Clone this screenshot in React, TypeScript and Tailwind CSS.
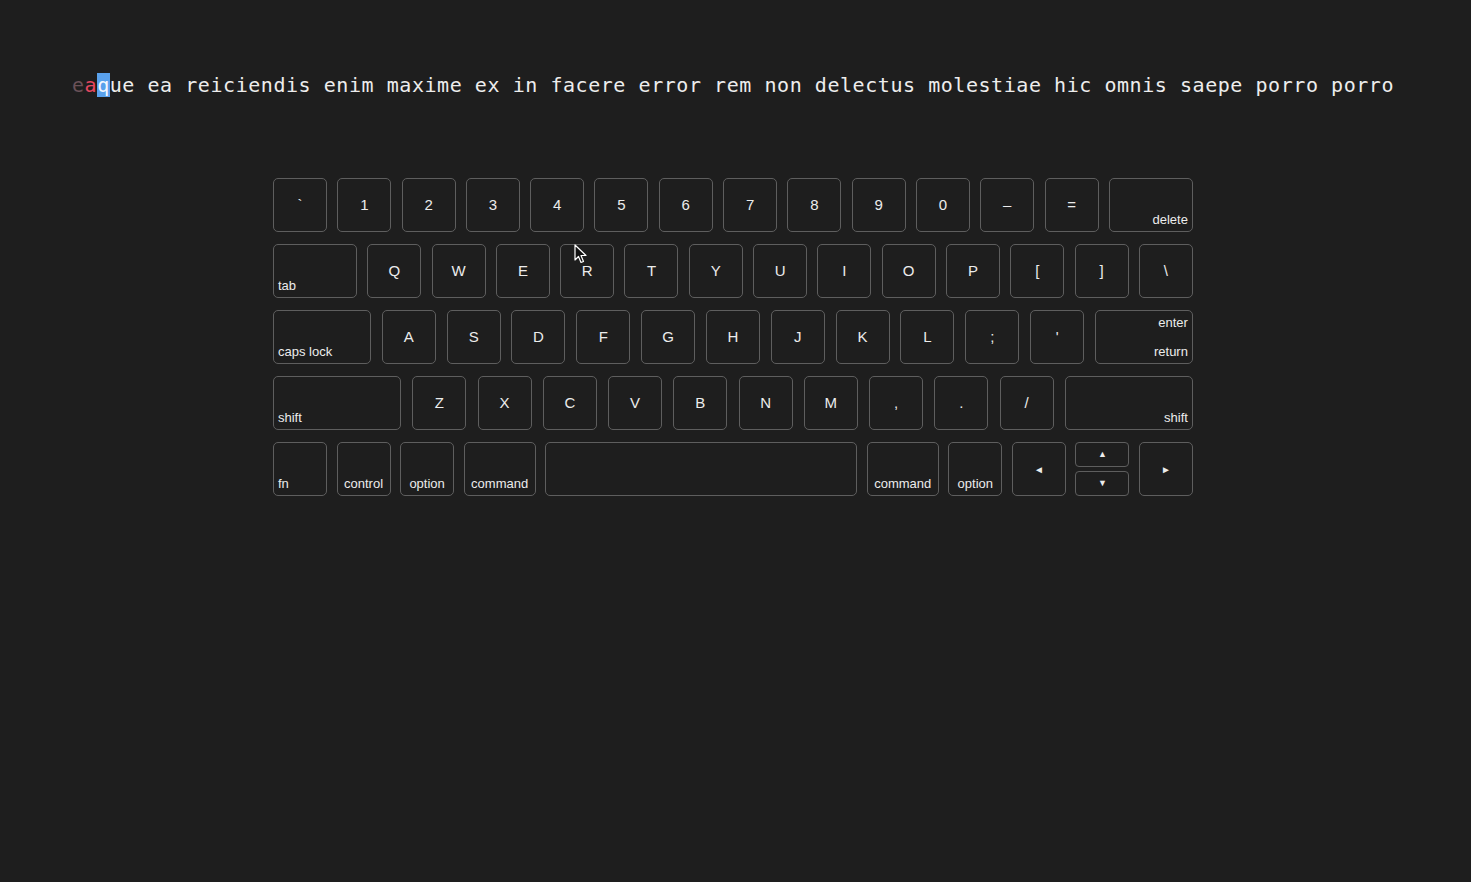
import React from 'react';

type KeyDef = {
  label: string;
  w: number;
  kind?: 'char' | 'left' | 'bottom' | 'right' | 'enter' | 'arrow' | 'updown' | 'blank';
};

const rows: KeyDef[][] = [
  [
    ...['`', '1', '2', '3', '4', '5', '6', '7', '8', '9', '0', '–', '='].map((c) => ({ label: c, w: 54 })),
    { label: 'delete', w: 84, kind: 'right' },
  ],
  [
    { label: 'tab', w: 84, kind: 'left' },
    ...['Q', 'W', 'E', 'R', 'T', 'Y', 'U', 'I', 'O', 'P', '[', ']', '\\'].map((c) => ({ label: c, w: 54 })),
  ],
  [
    { label: 'caps lock', w: 98, kind: 'left' },
    ...['A', 'S', 'D', 'F', 'G', 'H', 'J', 'K', 'L', ';', "'"].map((c) => ({ label: c, w: 54 })),
    { label: 'enter', w: 98, kind: 'enter' },
  ],
  [
    { label: 'shift', w: 128, kind: 'left' },
    ...['Z', 'X', 'C', 'V', 'B', 'N', 'M', ',', '.', '/'].map((c) => ({ label: c, w: 54 })),
    { label: 'shift', w: 128, kind: 'right' },
  ],
  [
    { label: 'fn', w: 54, kind: 'left' },
    { label: 'control', w: 54, kind: 'bottom' },
    { label: 'option', w: 54, kind: 'bottom' },
    { label: 'command', w: 72, kind: 'bottom' },
    { label: '', w: 312, kind: 'blank' },
    { label: 'command', w: 72, kind: 'bottom' },
    { label: 'option', w: 54, kind: 'bottom' },
    { label: '◄', w: 54, kind: 'arrow' },
    { label: '', w: 54, kind: 'updown' },
    { label: '►', w: 54, kind: 'arrow' },
  ],
];

const words =
  'eaque ea reiciendis enim maxime ex in facere error rem non delectus molestiae hic omnis saepe porro porro';

const Key: React.FC<{ k: KeyDef }> = ({ k }) => {
  const base = 'h-[54px] rounded-[5px] border border-[#5e5e5e] text-[#ececec] shrink-0';
  const kind = k.kind ?? 'char';

  if (kind === 'updown') {
    return (
      <div className="flex h-[54px] shrink-0 flex-col justify-between" style={{ width: k.w }}>
        <div className="flex h-[25px] items-center justify-center rounded-[4px] border border-[#5e5e5e] text-[9px] text-[#ececec]">
          ▲
        </div>
        <div className="flex h-[25px] items-center justify-center rounded-[4px] border border-[#5e5e5e] text-[9px] text-[#ececec]">
          ▼
        </div>
      </div>
    );
  }

  if (kind === 'char') {
    return (
      <div className={`${base} flex items-center justify-center text-[15px]`} style={{ width: k.w }}>
        {k.label}
      </div>
    );
  }

  if (kind === 'arrow') {
    return (
      <div className={`${base} flex items-center justify-center text-[10px]`} style={{ width: k.w }}>
        {k.label}
      </div>
    );
  }

  if (kind === 'left') {
    return (
      <div className={`${base} flex items-end justify-start px-[4px] pb-[2px] text-[13px]`} style={{ width: k.w }}>
        {k.label}
      </div>
    );
  }

  if (kind === 'bottom') {
    return (
      <div className={`${base} flex items-end justify-center pb-[2px] text-[13px]`} style={{ width: k.w }}>
        {k.label}
      </div>
    );
  }

  if (kind === 'right') {
    return (
      <div className={`${base} flex items-end justify-end px-[4px] pb-[2px] text-[13px]`} style={{ width: k.w }}>
        {k.label}
      </div>
    );
  }

  if (kind === 'enter') {
    return (
      <div
        className={`${base} flex flex-col items-end justify-between px-[4px] pt-[2px] pb-[2px] text-[13px]`}
        style={{ width: k.w }}
      >
        <span>enter</span>
        <span>return</span>
      </div>
    );
  }

  return <div className={base} style={{ width: k.w }} />;
};

const App: React.FC = () => {
  return (
    <div className="relative min-h-[882px] w-full bg-[#1e1e1e] pr-[5px] font-['Liberation_Sans',Arial,sans-serif]">
      <div className="pt-[73px] text-center font-['DejaVu_Sans_Mono',monospace] text-[20px] leading-[24px] tracking-[0.55px] text-[#ededed] whitespace-pre">
        <span className="text-[#6a5158]">e</span>
        <span className="text-[#e6475f]">a</span>
        <span className="bg-[#5aa1ec] text-[#f4f8ff]">q</span>
        {words.slice(3)}
      </div>

      <div className="mx-auto mt-[81px] flex w-[920px] flex-col gap-[12px]">
        {rows.map((row, i) => (
          <div key={i} className="flex justify-between">
            {row.map((k, j) => (
              <Key key={j} k={k} />
            ))}
          </div>
        ))}
      </div>

      {/* mouse pointer captured in the screenshot */}
      <svg className="absolute left-[574px] top-[244px]" width="14" height="20" viewBox="0 0 14 20">
        <path
          d="M1 1 L1 16 L4.5 12.5 L7 18.5 L9.5 17.5 L7 11.5 L12 11.5 Z"
          fill="#111"
          stroke="#fff"
          strokeWidth="1.2"
          strokeLinejoin="round"
        />
      </svg>
    </div>
  );
};

export default App;
